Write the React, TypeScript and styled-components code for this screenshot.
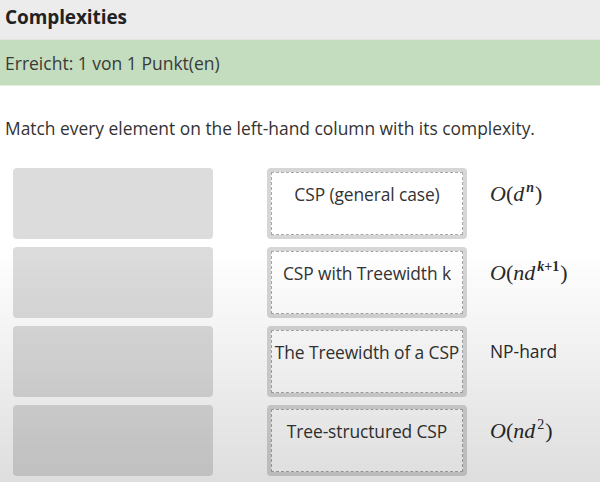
import React from "react";
import styled, { createGlobalStyle } from "styled-components";

const Global = createGlobalStyle`
  html, body { margin: 0; padding: 0; background: #ffffff; }
  body {
    font-family: "Open Sans", "Noto Sans", "Liberation Sans", sans-serif;
    color: #333333;
    width: 600px;
    height: 482px;
    overflow: hidden;
  }
  body::after {
    content: "";
    position: fixed;
    left: 0; top: 0; right: 0; bottom: 0;
    pointer-events: none;
    background: linear-gradient(to bottom, rgba(0,0,0,0) 0px, rgba(0,0,0,0) 250px, rgba(0,0,0,0.13) 482px);
  }
`;

const Page = styled.div`
  display: flex;
  flex-direction: column;
`;

const Header = styled.div`
  height: 40px;
  box-sizing: border-box;
  background: #ececec;
  display: flex;
  align-items: center;
  padding: 0 0 5px 5px;
  font-weight: 700;
  font-size: 19px;
  letter-spacing: -0.1px;
  color: #222;
  border-bottom: 1px solid #e2e8e0;
`;

const Status = styled.div`
  height: 45px;
  background: #c3ddbe;
  display: flex;
  align-items: center;
  padding-left: 5px;
  font-size: 17.5px;
  color: #3a3a3a;
  border-bottom: 1px solid #e4efe2;
`;

const Prompt = styled.div`
  margin-top: 30px;
  padding-left: 5px;
  font-size: 17.4px;
  color: #333;
  height: 24px;
  line-height: 24px;
`;

const Board = styled.div`
  margin-top: 28px;
  padding-left: 13px;
  display: grid;
  grid-template-columns: 200px 200px auto;
  column-gap: 54px;
  row-gap: 8px;
  grid-auto-rows: 71px;
`;

const Slot = styled.div`
  background: #dcdcdc;
  border-radius: 4px;
`;

const Item = styled.div`
  background: #d6d6d6;
  border-radius: 4px;
  padding: 4px;
  display: flex;
`;

const ItemInner = styled.div`
  flex: 1;
  background: #ffffff;
  border: 1px dashed #a8a8a8;
  display: flex;
  justify-content: center;
  padding-top: 9px;
  font-size: 17.4px;
  letter-spacing: -0.1px;
  color: #333;
  white-space: nowrap;
`;

const Label = styled.div<{ $math?: boolean }>`
  margin-left: -31px;
  padding-top: ${(p) => (p.$math ? "13px" : "13px")};
  font-family: ${(p) => (p.$math ? '"Liberation Serif", "DejaVu Serif", serif' : '"Open Sans", "Noto Sans", sans-serif')};
  font-style: ${(p) => (p.$math ? "italic" : "normal")};
  font-size: ${(p) => (p.$math ? "22px" : "17.4px")};
  color: #2a2a2a;
  white-space: nowrap;
`;

const Up = styled.sup`
  font-size: 14px;
  vertical-align: 9px;
  line-height: 0;
  margin-left: 2px;
  margin-right: 1px;
`;

const Bold = styled.span`
  font-weight: 700;
`;

const Paren = styled.span`
  font-style: normal;
`;

const rows: { item: string; label: React.ReactNode; math: boolean }[] = [
  {
    item: "CSP (general case)",
    label: (
      <span>
        O<Paren>(</Paren>d<Up><Bold>n</Bold></Up><Paren>)</Paren>
      </span>
    ),
    math: true,
  },
  {
    item: "CSP with Treewidth k",
    label: (
      <span>
        O<Paren>(</Paren>nd<Up><Bold>k</Bold><Paren><Bold>+1</Bold></Paren></Up><Paren>)</Paren>
      </span>
    ),
    math: true,
  },
  { item: "The Treewidth of a CSP", label: "NP-hard", math: false },
  {
    item: "Tree-structured CSP",
    label: (
      <span>
        O<Paren>(</Paren>nd<Up><Paren>2</Paren></Up><Paren>)</Paren>
      </span>
    ),
    math: true,
  },
];

export default function App() {
  return (
    <>
      <Global />
      <Page>
        <Header>Complexities</Header>
        <Status>Erreicht: 1 von 1 Punkt(en)</Status>
        <Prompt>Match every element on the left-hand column with its complexity.</Prompt>
        <Board>
          {rows.map((r) => (
            <React.Fragment key={r.item}>
              <Slot />
              <Item>
                <ItemInner>{r.item}</ItemInner>
              </Item>
              <Label $math={r.math}>{r.label}</Label>
            </React.Fragment>
          ))}
        </Board>
      </Page>
    </>
  );
}
